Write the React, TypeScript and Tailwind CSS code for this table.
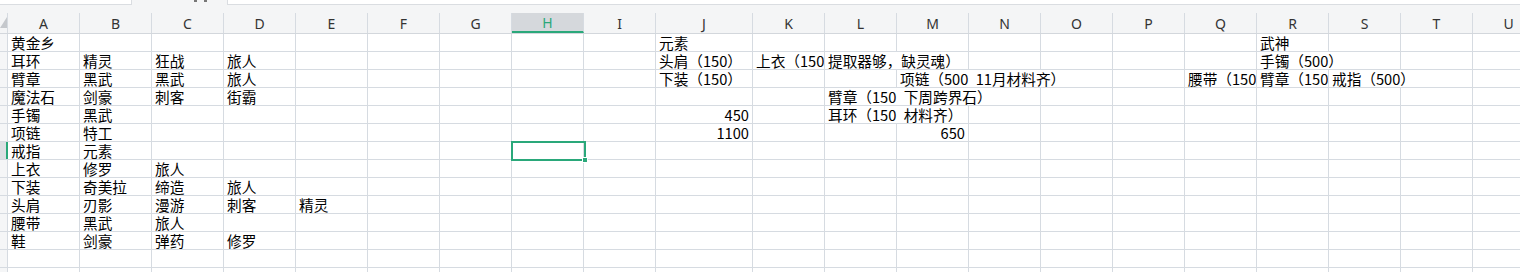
import React from "react";

type Cell = { t: string; span?: number; right?: boolean; clip?: boolean };

const COLS: { key: string; w: number }[] = [
  "A", "B", "C", "D", "E", "F", "G", "H", "I", "J", "K", "L", "M", "N", "O", "P", "Q", "R", "S", "T", "U",
].map((k) => ({ key: k, w: k === "J" ? 97 : 72 }));

const WIDTH: Record<number, string> = {
  72: "w-[72px]",
  97: "w-[97px]",
  144: "w-[144px]",
  216: "w-[216px]",
};

const SP = "\u2002";

// Cells whose text would run into a filled neighbour are clipped at their right edge.
const ROWS: Record<string, Cell>[] = [
  { A: { t: "黄金乡" }, J: { t: "元素" }, R: { t: "武神" } },
  {
    A: { t: "耳环" }, B: { t: "精灵" }, C: { t: "狂战" }, D: { t: "旅人" },
    J: { t: "头肩（150）" }, K: { t: "上衣（150）", clip: true }, L: { t: "提取器够，缺灵魂）", span: 2 },
    R: { t: "手镯（500）", span: 2 },
  },
  {
    A: { t: "臂章" }, B: { t: "黑武" }, C: { t: "黑武" }, D: { t: "旅人" },
    J: { t: "下装（150）" }, M: { t: `项链（500${SP}11月材料齐）`, span: 3 },
    Q: { t: "腰带（150）", clip: true }, R: { t: "臂章（150）", clip: true }, S: { t: "戒指（500）", span: 2 },
  },
  {
    A: { t: "魔法石" }, B: { t: "剑豪" }, C: { t: "刺客" }, D: { t: "街霸" },
    L: { t: `臂章（150${SP}下周跨界石）`, span: 3 },
  },
  {
    A: { t: "手镯" }, B: { t: "黑武" }, J: { t: "450", right: true },
    L: { t: `耳环（150${SP}材料齐）`, span: 2 },
  },
  { A: { t: "项链" }, B: { t: "特工" }, J: { t: "1100", right: true }, M: { t: "650", right: true } },
  { A: { t: "戒指" }, B: { t: "元素" } },
  { A: { t: "上衣" }, B: { t: "修罗" }, C: { t: "旅人" } },
  { A: { t: "下装" }, B: { t: "奇美拉" }, C: { t: "缔造" }, D: { t: "旅人" } },
  { A: { t: "头肩" }, B: { t: "刃影" }, C: { t: "漫游" }, D: { t: "刺客" }, E: { t: "精灵" } },
  { A: { t: "腰带" }, B: { t: "黑武" }, C: { t: "旅人" } },
  { A: { t: "鞋" }, B: { t: "剑豪" }, C: { t: "弹药" }, D: { t: "修罗" } },
  {},
  {},
];

const ACTIVE_ROW = 6;
const ACTIVE_COL = "H";

function Row({ cells, index }: { cells: Record<string, Cell>; index: number }) {
  const out: React.ReactNode[] = [];
  for (let i = 0; i < COLS.length; i++) {
    const col = COLS[i];
    const cell = cells[col.key];
    const span = cell?.span ?? 1;
    let w = 0;
    for (let j = 0; j < span; j++) w += COLS[i + j].w;
    const active = index === ACTIVE_ROW && col.key === ACTIVE_COL;
    out.push(
      <div
        key={col.key}
        className={`relative shrink-0 h-full border-r border-[#d6dbe1] flex items-center whitespace-nowrap ${WIDTH[w]} ${
          cell?.clip ? "overflow-x-clip" : ""
        } ${cell?.right ? "justify-end pr-[3px]" : "pl-[3px]"}`}
      >
        {cell && <span className="block shrink-0 leading-[18px]">{cell.t}</span>}
        {active && (
          <div className="absolute -left-px -top-px w-[75px] h-[20px] border-2 border-[#2aa87a] z-10">
            <div className="absolute -right-[4px] -bottom-[4px] w-[6px] h-[6px] bg-[#2aa87a] border border-white" />
          </div>
        )}
      </div>
    );
    i += span - 1;
  }
  const selectedRow = index === ACTIVE_ROW;
  return (
    <div className="flex h-[18px] border-b border-[#d6dbe1]">
      <div
        className={`shrink-0 w-[8px] h-full ${
          selectedRow ? "bg-[#dcdfe3] border-r-2 border-[#2aa87a]" : "bg-[#f5f6f7] border-r border-[#d6dbe1]"
        }`}
      />
      {out}
    </div>
  );
}

export default function App() {
  return (
    <div className="w-[1520px] h-[272px] overflow-hidden bg-white text-[14.67px] text-black font-['Noto_Sans_CJK_SC',sans-serif]">
      {/* sheet tab strip */}
      <div className="flex h-[5px]">
        <div className="w-[131px] border-b border-[#dadde1]" />
        <div className="relative w-[97px] bg-[#f4f5f6] border-x border-[#dadde1]">
          <div className="absolute left-[62px] top-0 w-[3px] h-[2px] bg-[#777]" />
          <div className="absolute left-[72px] top-0 w-[3px] h-[2px] bg-[#777]" />
        </div>
        <div className="flex-1 border-b border-[#dadde1]" />
      </div>
      <div className="h-[8px] bg-[#f4f5f6]" />

      {/* column headers */}
      <div className="flex h-[21px] bg-[#f4f5f6] border-b border-[#d3d7dc] font-['Noto_Sans',sans-serif] text-[14px] text-[#333]">
        <div className="shrink-0 w-[8px] h-full border-r border-[#d6dbe1] relative overflow-hidden">
          <svg className="absolute left-0 top-[4px]" width="8" height="12" viewBox="0 0 8 12">
            <path d="M7 0 L7 11 L0 11 Z" fill="#c5c8cc" />
          </svg>
        </div>
        {COLS.map((c) =>
          c.key === ACTIVE_COL ? (
            <div
              key={c.key}
              className={`shrink-0 h-[20px] bg-[#d5d8dc] border-r border-[#d6dbe1] border-b-2 border-b-[#2aa87a] flex items-center justify-center text-[#2aa87a] ${WIDTH[c.w]}`}
            >
              {c.key}
            </div>
          ) : (
            <div
              key={c.key}
              className={`shrink-0 h-full border-r border-[#d6dbe1] flex items-center justify-center ${WIDTH[c.w]}`}
            >
              {c.key}
            </div>
          )
        )}
      </div>

      {ROWS.map((r, i) => (
        <Row key={i} cells={r} index={i} />
      ))}
    </div>
  );
}
